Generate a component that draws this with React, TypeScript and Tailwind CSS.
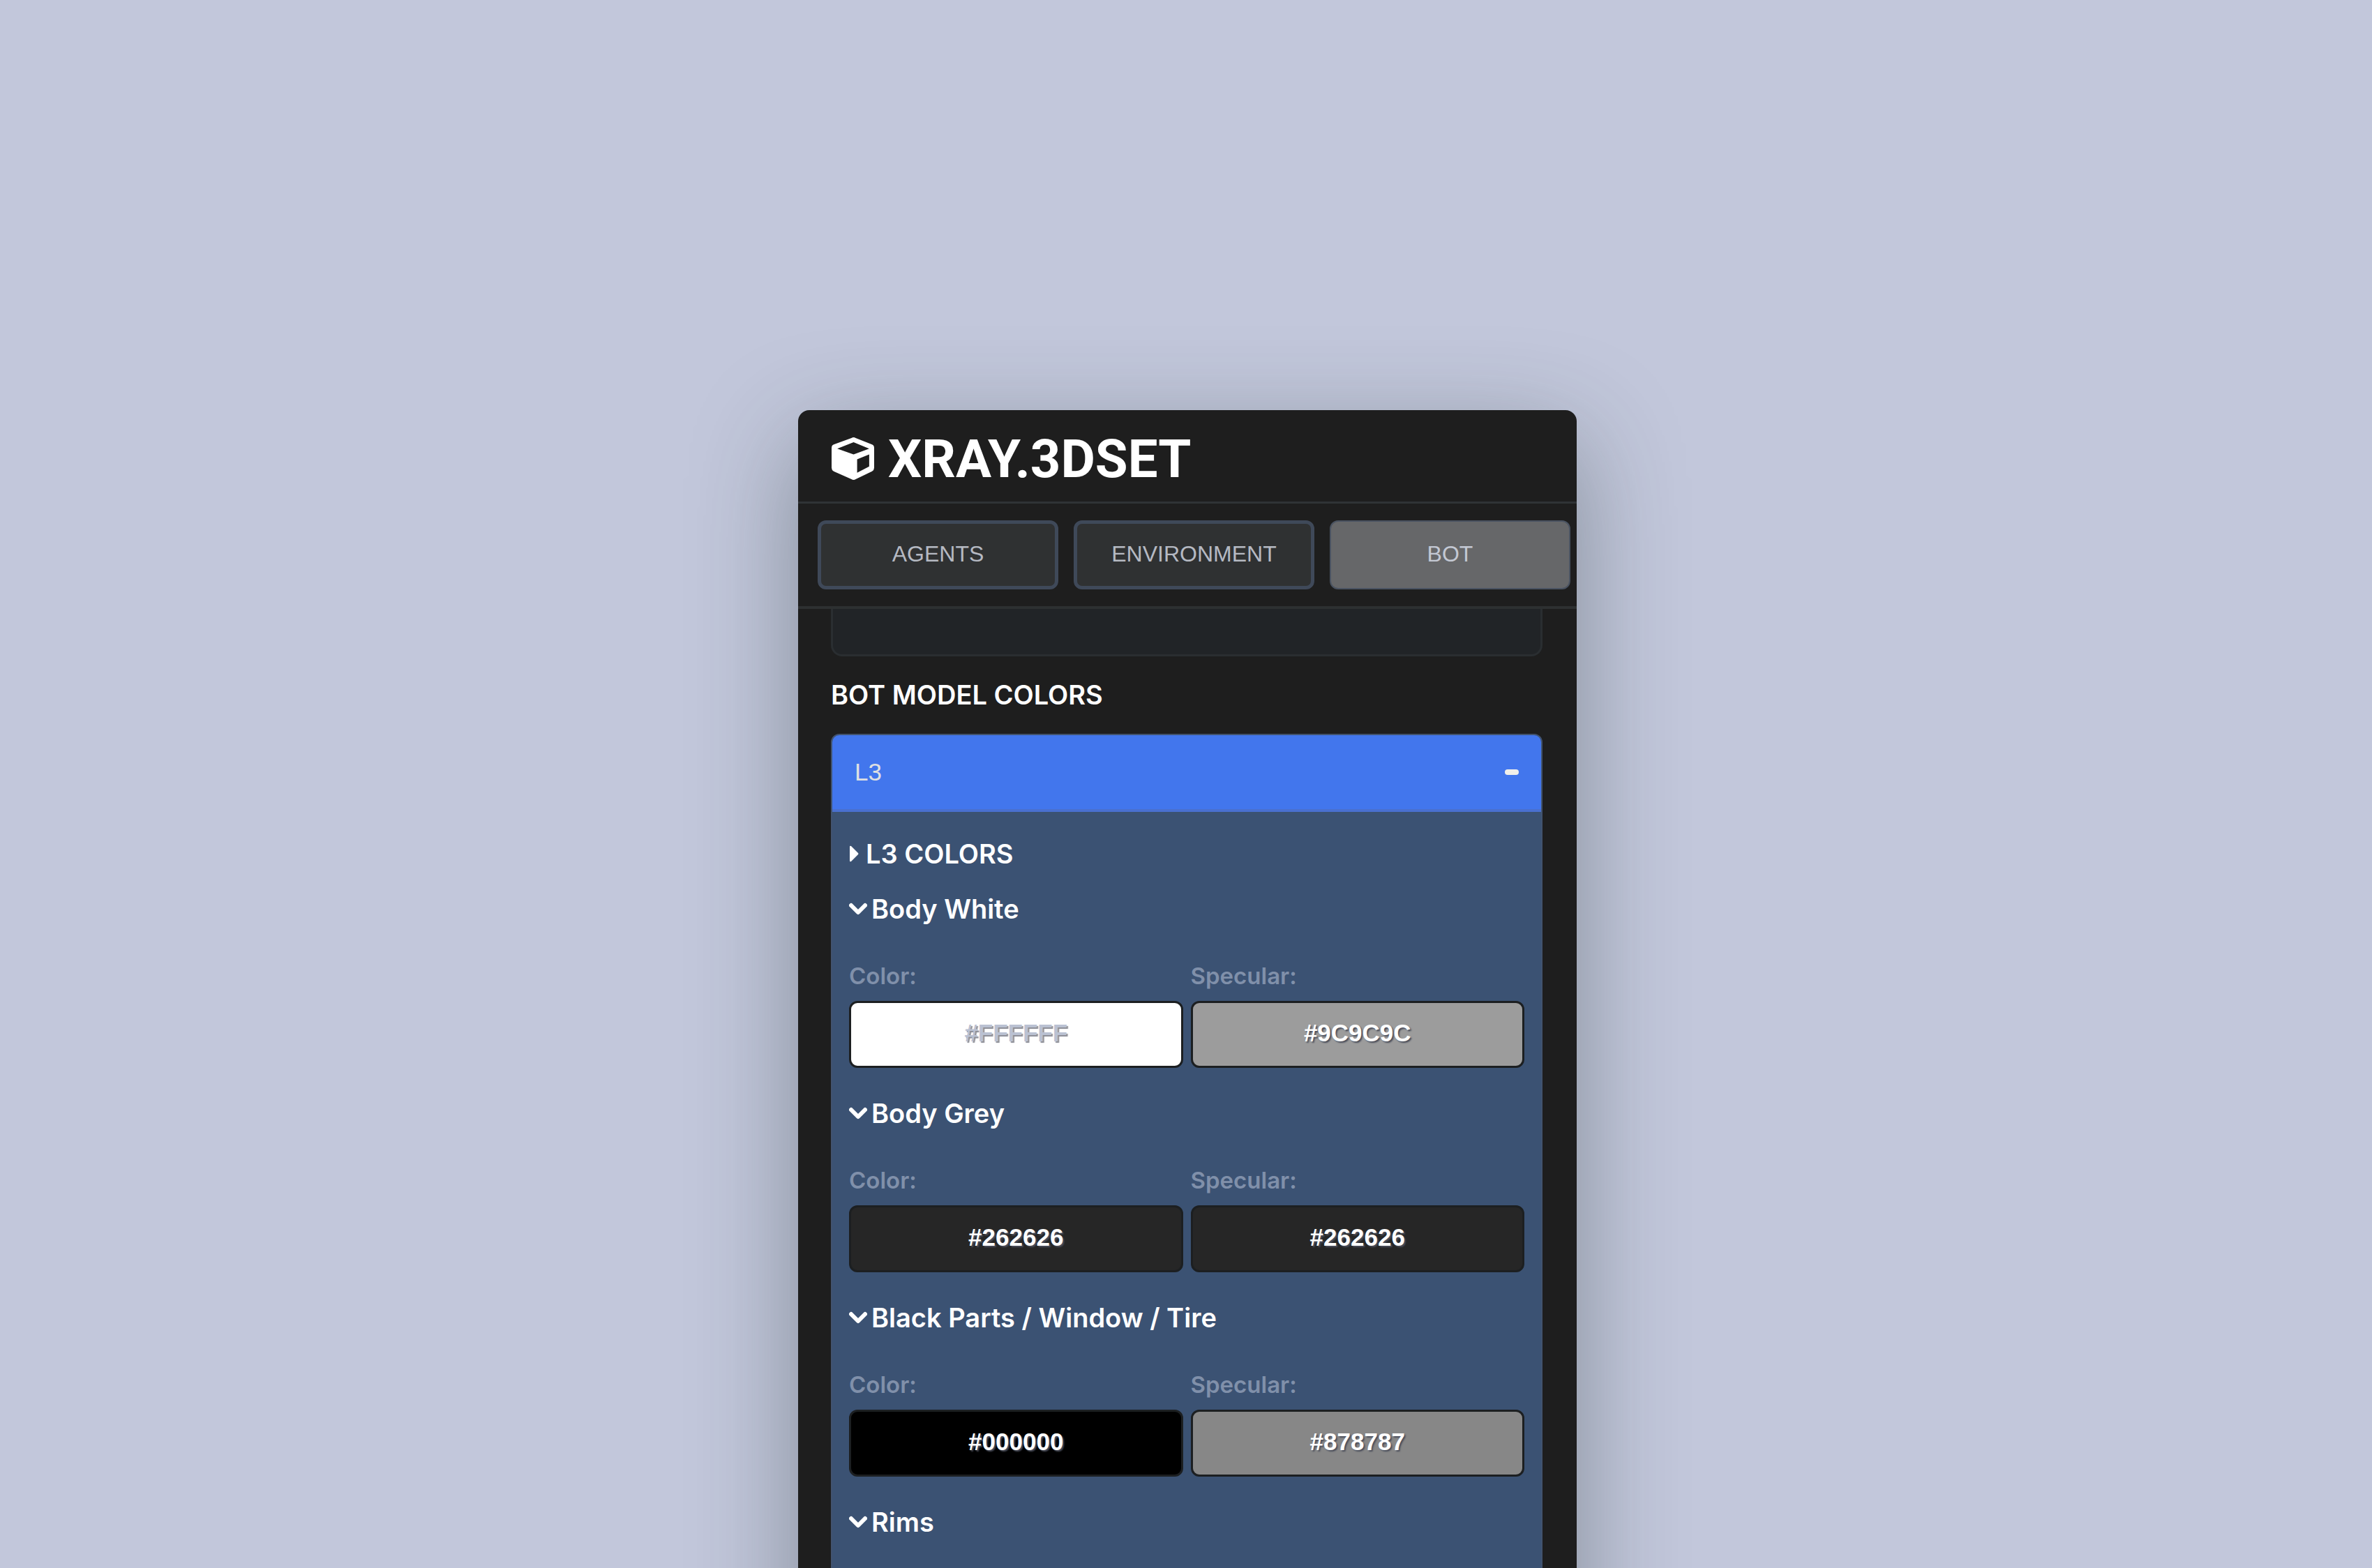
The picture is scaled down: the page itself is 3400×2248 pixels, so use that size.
import { useState } from "react";

type Material = { name: string; color: string; specular: string };

const tabs = ["AGENTS", "ENVIRONMENT", "BOT"];

const materials: Material[] = [
  { name: "Body White", color: "#FFFFFF", specular: "#9C9C9C" },
  { name: "Body Grey", color: "#262626", specular: "#262626" },
  { name: "Black Parts / Window / Tire", color: "#000000", specular: "#878787" },
  { name: "Rims", color: "#C4C4C4", specular: "#FFFFFF" },
];

function CubeIcon() {
  return (
    <svg viewBox="0 0 60 60" className="h-[61px] w-[61px] shrink-0" aria-hidden="true">
      <path
        fill="white"
        fillRule="evenodd"
        d="M28 1 Q31 -1 34 1 L57 10 Q60 11 60 15 V43 Q60 46 57 48 L34 59 Q31 61 28 59 L3 48 Q0 46 0 43 V15 Q0 11 3 10 Z M31 7 L8 16 L31 24 L53 16 Z M53 24 L36 31 V50 L53 41 Z"
      />
    </svg>
  );
}

function Chevron() {
  return (
    <svg viewBox="0 0 26 18" className="h-[18px] w-[26px]" aria-hidden="true">
      <path d="M3 4 L13 14 L23 4" fill="none" stroke="white" strokeWidth="6" strokeLinecap="round" strokeLinejoin="round" />
    </svg>
  );
}

function ColorField({ id, label, value }: { id: string; label: string; value: string }) {
  const [hex, setHex] = useState(value);
  // white text vanishes on a white swatch
  const isWhite = hex.toUpperCase() === "#FFFFFF";

  return (
    <div className="flex min-w-0 flex-col gap-[14px]">
      <label htmlFor={id} className="text-[33px] leading-[44px] font-semibold text-[#8090aa]">
        {label}
      </label>
      <input
        id={id}
        type="text"
        value={hex}
        onChange={(e) => setHex(e.target.value)}
        style={{ backgroundColor: hex }}
        className={`h-24 w-full rounded-xl border-3 border-[#1c1f21] pb-1 text-center font-['Liberation_Sans',Arial,sans-serif] text-[35px] font-bold outline-none ${
          isWhite ? "text-[#bac1d2] text-shadow-[2px_2px_1px_#8b8d96]" : "text-white text-shadow-[2px_2px_2px_#4b4f5c]"
        }`}
      />
    </div>
  );
}

function MaterialGroup({ material, index }: { material: Material; index: number }) {
  const [open, setOpen] = useState(true);

  return (
    <section className="flex flex-col gap-12">
      <button
        type="button"
        aria-expanded={open}
        onClick={() => setOpen(!open)}
        className="flex h-[52px] items-center gap-1.5 text-left text-[38px] leading-[52px] font-semibold text-white"
      >
        <Chevron />
        {material.name}
      </button>
      {open && (
        <div className="grid grid-cols-2 gap-[11px] pb-[39px]">
          <ColorField id={`color-${index}`} label="Color:" value={material.color} />
          <ColorField id={`specular-${index}`} label="Specular:" value={material.specular} />
        </div>
      )}
    </section>
  );
}

export default function App() {
  const [active, setActive] = useState("BOT");
  const [expanded, setExpanded] = useState(true);

  return (
    <main className="flex h-screen items-start justify-center overflow-hidden bg-[#c2c7db] pt-[588px] pl-1 font-[Inter,'Liberation_Sans',sans-serif]">
      <div className="flex w-full max-w-[1116px] flex-col overflow-hidden rounded-2xl bg-[#1e1e1e] shadow-[0_44px_150px_rgba(38,52,52,0.4)]">
        <header className="flex h-[134px] items-center gap-5 border-b-3 border-[#2f3336] px-12 pt-2">
          <CubeIcon />
          <h1 className="font-[Roboto,sans-serif] text-[76px] leading-none font-bold text-white">XRAY.3DSET</h1>
        </header>

        <nav className="grid grid-cols-3 gap-[22px] border-b-4 border-[#2d3031] pt-6 pr-[9px] pb-6 pl-7">
          {tabs.map((tab) => (
            <button
              key={tab}
              type="button"
              aria-pressed={active === tab}
              onClick={() => setActive(tab)}
              className={`h-[99px] rounded-xl pb-1 font-['Liberation_Sans',Arial,sans-serif] text-[32px] ${
                active === tab
                  ? "border-2 border-[#4a5361] bg-[#666769] text-[#c3c8d3]"
                  : "border-5 border-[#3f4959] bg-[#2f3132] text-[#b5b9c2]"
              }`}
            >
              {tab}
            </button>
          ))}
        </nav>

        <div className="flex flex-col pr-[49px] pl-[47px]">
          <div className="h-[68px] rounded-b-2xl border-3 border-t-0 border-[#2a2e31] bg-[#212427]" />

          <h2 className="pt-[29px] pb-[30px] text-[38px] leading-[52px] font-semibold text-white">BOT MODEL COLORS</h2>

          <div className="overflow-hidden rounded-t-xl border-2 border-[#41536f] bg-[#3b5273]">
            <button
              type="button"
              aria-expanded={expanded}
              onClick={() => setExpanded(!expanded)}
              className="flex h-[110px] w-full items-center justify-between border-b-4 border-[#4a70d0] bg-[#4276ed] px-8 font-['Liberation_Sans',Arial,sans-serif] text-[35px] text-[#dfe0e2]"
            >
              L3
              <span className="h-2 w-5 rounded-sm bg-[#f0efea]" />
            </button>

            {expanded && (
              <div className="flex flex-col px-6 pt-[34px]">
                <button
                  type="button"
                  className="mb-[27px] flex h-[52px] items-center gap-[10px] text-left text-[38px] leading-[52px] font-semibold text-white"
                >
                  <svg viewBox="0 0 14 24" className="h-6 w-[14px]" aria-hidden="true">
                    <path d="M1 2 Q1 0 3 1 L13 11 Q14 12 13 13 L3 23 Q1 24 1 22 Z" fill="white" />
                  </svg>
                  L3 COLORS
                </button>
                {materials.map((material, index) => (
                  <MaterialGroup key={material.name} material={material} index={index} />
                ))}
              </div>
            )}
          </div>
        </div>
      </div>
    </main>
  );
}
